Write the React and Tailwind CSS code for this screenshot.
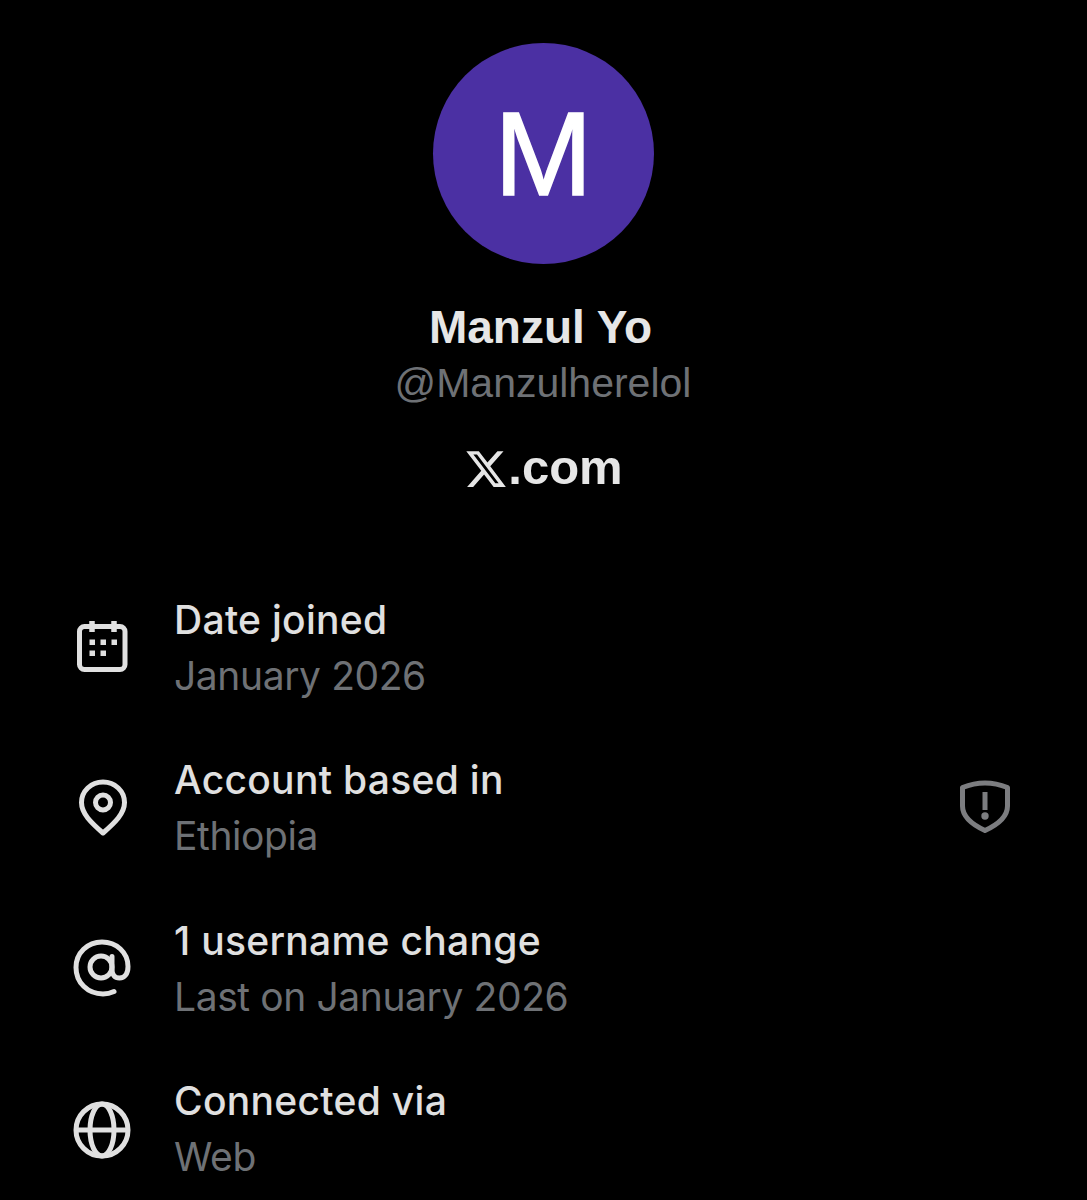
const iconClass = "w-[60px] h-[60px] text-[#e0e0e0] shrink-0"

function CalendarIcon() {
  return (
    <svg className={iconClass} viewBox="0 0 60 60" fill="none" stroke="currentColor">
      <rect x="8.5" y="8.500" width="45.500" height="43" rx="5" strokeWidth="5" />
      <path d="M21 3v11M43 3v11" strokeWidth="5.500" />
      <g fill="currentColor" stroke="none">
        <rect x="18.500" y="21.500" width="5.500" height="5.500" />
        <rect x="29.500" y="21.500" width="5.500" height="5.500" />
        <rect x="40.500" y="21.500" width="5.500" height="5.500" />
        <rect x="18.500" y="32.500" width="5.500" height="5.500" />
        <rect x="29.500" y="32.500" width="5.500" height="5.500" />
      </g>
    </svg>
  )
}

function PinIcon() {
  return (
    <svg className={iconClass} viewBox="0 0 60 60" fill="none" stroke="currentColor" strokeWidth="5">
      <path d="M32 4C20 4 10.500 13 10.500 24.500c0 11 9.500 20 21.500 30.500 12-10.500 21.500-19.500 21.500-30.500C53.500 13 44 4 32 4z" strokeLinejoin="round" />
      <circle cx="32" cy="24.500" r="7.500" />
    </svg>
  )
}

function AtIcon() {
  return (
    <svg className={iconClass} viewBox="0 -1 60 60" fill="none" stroke="currentColor" strokeWidth="5" strokeLinecap="round">
      <path d="M43 51.500c-3.500 1.600-7 2.400-11 2.400C16.500 53.900 5 42.500 5 27.500 5 13 16.500 2 31 2c14.500 0 26 10.500 26 24.500 0 7.500-3.500 11.500-8.500 11.500-5 0-7.500-3.500-7.500-8.500V16.500" />
      <circle cx="30" cy="27" r="11" />
    </svg>
  )
}

function GlobeIcon() {
  return (
    <svg className={iconClass} viewBox="0 -1 60 60" fill="none" stroke="currentColor" strokeWidth="5">
      <circle cx="31" cy="30" r="26" />
      <ellipse cx="31" cy="30" rx="12" ry="26" />
      <path d="M5 30h52" />
    </svg>
  )
}

function ShieldIcon() {
  return (
    <svg className="w-[54px] h-[54px] mb-[4px] text-[#7c7d80]" viewBox="0 0 54 54" fill="none">
      <path d="M26 4c7 0 15 1.500 22.500 4.500V27c0 11-9.500 18.500-22.500 24.500C13 45.500 3.500 38 3.500 27V8.500C11 5.500 19 4 26 4z" stroke="currentColor" strokeWidth="5" strokeLinejoin="round" />
      <rect x="23.500" y="13" width="5" height="18" fill="currentColor" />
      <circle cx="26" cy="37" r="3.700" fill="currentColor" />
    </svg>
  )
}

const rows = [
  { icon: <CalendarIcon />, title: "Date joined", sub: "January 2026" },
  { icon: <PinIcon />, title: "Account based in", sub: "Ethiopia", warn: true },
  { icon: <AtIcon />, title: "1 username change", sub: "Last on January 2026" },
  { icon: <GlobeIcon />, title: "Connected via", sub: "Web" },
]

export default function App() {
  return (
    <div className="w-[1087px] h-[1200px] bg-black overflow-hidden font-['Inter',sans-serif]">
      {/* Profile header */}
      <div className="flex flex-col items-center pt-[43px]">
        <div className="w-[221px] h-[221px] rounded-full bg-[#4b30a3] flex items-center justify-center">
          <span className="text-white text-[118px] leading-none font-['Liberation_Sans',sans-serif] [-webkit-text-stroke:1.5px_white]">M</span>
        </div>
        <div className="mt-[36px] mr-[6px] text-[#e6e6e6] text-[46px] leading-[54px] font-bold font-['Liberation_Sans',sans-serif]">
          Manzul Yo
        </div>
        <div className="mt-[2px] mr-[1px] text-[#6e7175] text-[41px] leading-[54px] font-['Liberation_Sans',sans-serif]">
          @Manzulherelol
        </div>
        <div className="mt-[30px] flex items-center text-[#e6e6e6] text-[49px] leading-[54px] font-bold font-['Liberation_Sans',sans-serif]">
          <svg className="w-[44px] h-[44px] mt-[3px]" viewBox="0 0 24 24" fill="currentColor">
            <path d="M18.244 2.25h3.308l-7.227 8.26 8.502 11.24H16.17l-5.214-6.817L4.99 21.75H1.68l7.73-8.835L1.254 2.25H8.08l4.713 6.231zm-1.161 17.52h1.833L7.084 4.126H5.117z" />
          </svg>
          <span>.com</span>
        </div>
      </div>

      {/* Details */}
      <div className="mt-[98px] flex flex-col gap-[48.4px] pl-[71px] pr-[74px]">
        {rows.map((row) => (
          <div key={row.title} className="flex items-center h-[112px]">
            {row.icon}
            <div className="ml-[43px] flex-1">
              <div className="text-[#e0e0e0] text-[39px] leading-[56px] font-medium tracking-[0.3px]">{row.title}</div>
              <div className="text-[#6e7175] text-[39px] leading-[56px] tracking-[-0.4px]">{row.sub}</div>
            </div>
            {row.warn && <ShieldIcon />}
          </div>
        ))}
      </div>
    </div>
  )
}
